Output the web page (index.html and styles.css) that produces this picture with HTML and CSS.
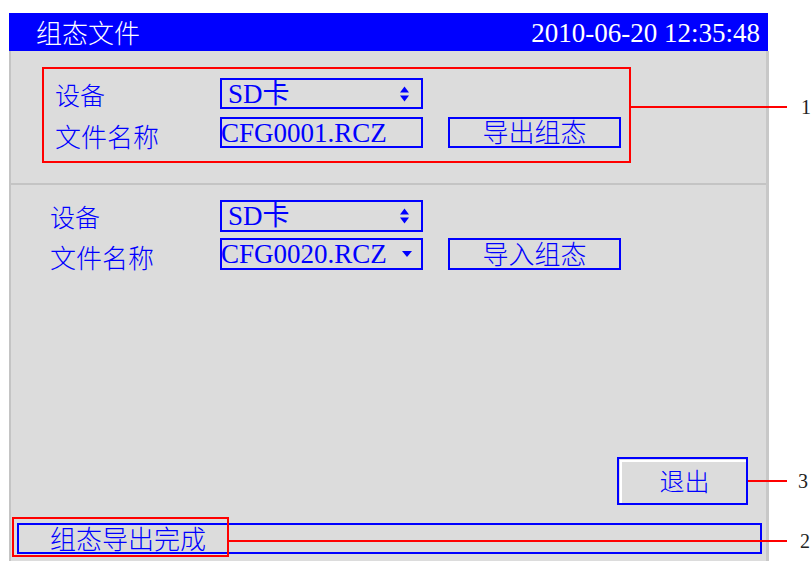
FILE: index.html
```html
<!DOCTYPE html>
<html lang="zh-CN">
<head>
    <meta charset="UTF-8">
    <meta name="viewport" content="width=device-width, initial-scale=1.0">
    <title>组态文件</title>
    <link rel="stylesheet" href="styles.css">
</head>
<body>
    <div class="screen">
        <div class="titlebar">
            <span class="title">组态文件</span>
            <span class="clock">2010-06-20 12:35:48</span>
        </div>

        <div class="panel">
            <div class="section export">
                <div class="mark-box">
                    <div class="form-grid">
                        <span class="label">设备</span>
                        <div class="field select">
                            <span>SD卡</span>
                            <svg class="updown" width="9" height="16" viewBox="0 0 9 16"><polygon points="0,6.5 4.5,0.5 9,6.5"/><polygon points="0,9.5 9,9.5 4.5,15.5"/></svg>
                        </div>
                        <span></span>

                        <span class="label name">文件名称</span>
                        <div class="field text">CFG0001.RCZ</div>
                        <button class="btn">导出组态</button>
                    </div>
                </div>
            </div>

            <div class="section import">
                <div class="form-grid">
                    <span class="label">设备</span>
                    <div class="field select">
                        <span>SD卡</span>
                        <svg class="updown" width="9" height="16" viewBox="0 0 9 16"><polygon points="0,6.5 4.5,0.5 9,6.5"/><polygon points="0,9.5 9,9.5 4.5,15.5"/></svg>
                    </div>
                    <span></span>

                    <span class="label name">文件名称</span>
                    <div class="field text drop">
                        <span>CFG0020.RCZ</span>
                        <svg class="down" width="10" height="6" viewBox="0 0 10 6"><polygon points="0,0 10,0 5,6"/></svg>
                    </div>
                    <button class="btn">导入组态</button>
                </div>
            </div>

            <div class="footer">
                <button class="btn exit">退出</button>
                <div class="status">组态导出完成</div>
            </div>
        </div>
    </div>

    <!-- callouts -->
    <div class="notes">
        <div class="note-box status-mark"></div>
        <div class="note-line line-1"></div>
        <div class="note-line line-3"></div>
        <div class="note-line line-2"></div>
        <span class="note-num num-1">1</span>
        <span class="note-num num-3">3</span>
        <span class="note-num num-2">2</span>
    </div>
</body>
</html>
```

FILE: styles.css
```css
body {
    margin: 0;
    padding: 0;
    background-color: #fff;
    font-family: 'Liberation Serif', 'Noto Sans CJK SC', serif;
    position: relative;
    width: 812px;
    height: 561px;
    overflow: hidden;
}
.screen {
    margin: 13px 0 0 9px;
    width: 760px;
    display: flex;
    flex-direction: column;
}
.titlebar {
    height: 38px;
    margin-right: 1px;
    background-color: #0000ff;
    color: #fff;
    display: flex;
    justify-content: space-between;
    align-items: center;
    padding: 0 8px 0 27px;
}
.title {
    font-family: 'Noto Sans CJK SC', sans-serif;
    font-weight: 300;
    font-size: 26px;
    line-height: 30px;
}
.clock {
    font-size: 27px;
    line-height: 30px;
    padding-top: 2px;
}
.panel {
    box-sizing: border-box;
    height: 510px;
    background-color: #dcdcdc;
    border-left: 2px solid #c4c4c4;
    border-right: 3px solid #c8c8c8;
    display: flex;
    flex-direction: column;
    color: #0000ff;
}
.section.export {
    padding: 16px 0 20px 31px;
    border-bottom: 2px solid #c4c4c4;
}
.mark-box {
    box-sizing: border-box;
    width: 589px;
    height: 96px;
    border: 2px solid #ff0000;
    padding: 9px 0 0 11px;
}
.form-grid {
    display: grid;
    grid-template-columns: 140px 203px 173px;
    grid-auto-rows: 31px;
    column-gap: 25px;
    row-gap: 8px;
    align-items: center;
}
.section.import {
    padding: 15px 0 0 39px;
}
.section.import .form-grid {
    grid-template-columns: 145px 203px 173px;
    grid-auto-rows: 32px;
    row-gap: 6px;
}
.label {
    font-family: 'Noto Sans CJK SC', sans-serif;
    font-weight: 300;
    font-size: 25px;
    line-height: 30px;
    white-space: nowrap;
}
.label.name {
    font-size: 26px;
    padding-top: 6px;
}
.field {
    box-sizing: border-box;
    height: 100%;
    border: 2px solid #0000ff;
    font-size: 27px;
    line-height: 26px;
    display: flex;
    align-items: center;
    justify-content: space-between;
    white-space: nowrap;
}
.field.select {
    padding: 0 12px 0 6px;
}
.field.text {
    padding: 0 9px 0 0;
    text-indent: -1px;
}
.updown, .down {
    fill: #0000ff;
    flex-shrink: 0;
}
.btn {
    box-sizing: border-box;
    height: 100%;
    margin: 0;
    padding: 0 0 3px;
    background-color: transparent;
    border: 2px solid #0000ff;
    color: #0000ff;
    font-family: 'Noto Sans CJK SC', sans-serif;
    font-weight: 300;
    font-size: 26px;
    line-height: 24px;
    cursor: pointer;
}
.footer {
    margin-top: auto;
    display: flex;
    flex-direction: column;
}
.btn.exit {
    align-self: flex-end;
    width: 131px;
    height: 48px;
    margin: 0 18px 18px 0;
    font-size: 25px;
    padding: 0 0 2px 4px;
    box-shadow: inset 1px 1px 0 #dcdcdc, inset 3px 3px 0 #fff;
}
.status {
    box-sizing: border-box;
    height: 31px;
    margin: 0 4px 7px 6px;
    border: 2px solid #0000ff;
    padding-left: 31px;
    font-family: 'Noto Sans CJK SC', sans-serif;
    font-weight: 300;
    font-size: 26px;
    line-height: 26px;
}
.notes {
    position: absolute;
    top: 0;
    left: 0;
    width: 812px;
    height: 561px;
    pointer-events: none;
}
.note-box {
    position: absolute;
    box-sizing: border-box;
    border: 2px solid #ff0000;
}
.status-mark {
    left: 12px;
    top: 517px;
    width: 217px;
    height: 40px;
}
.note-line {
    position: absolute;
    height: 2px;
    background-color: #ff0000;
}
.line-1 { left: 631px; top: 106px; width: 156px; }
.line-3 { left: 748px; top: 480px; width: 39px; }
.line-2 { left: 229px; top: 540px; width: 558px; }
.note-num {
    position: absolute;
    font-size: 20px;
    line-height: 20px;
    color: #222;
}
.num-1 { left: 801px; top: 97px; }
.num-3 { left: 798px; top: 471px; }
.num-2 { left: 800px; top: 531px; }
```
